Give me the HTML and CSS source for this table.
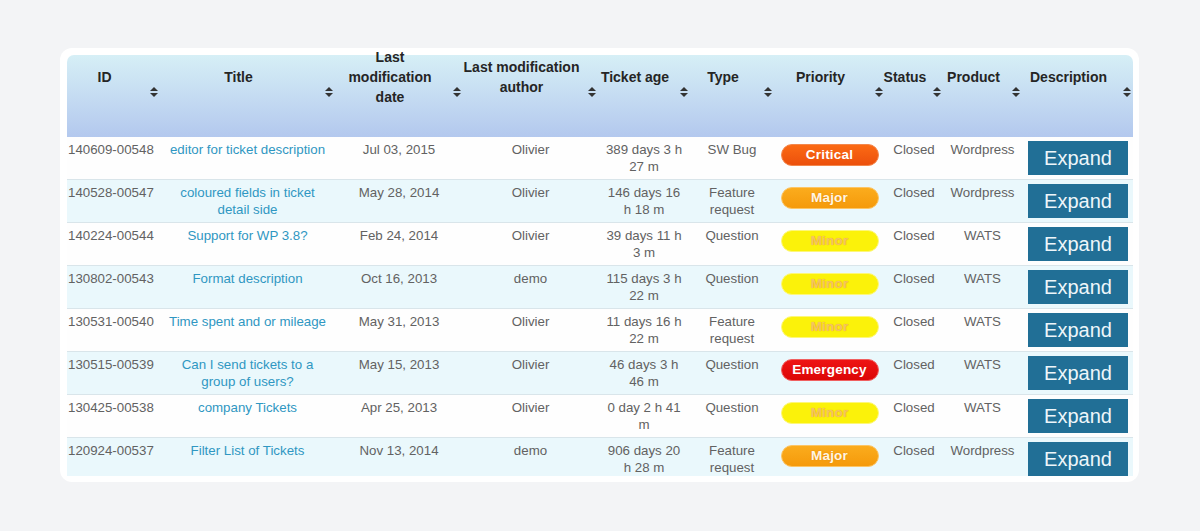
FILE: index.html
```html
<!DOCTYPE html>
<html lang="en">
<head>
<meta charset="utf-8">
<title>Tickets</title>
<link rel="stylesheet" href="styles.css">
</head>
<body>
<div class="card">
  <div class="wrap">
    <table class="tickets">
      <colgroup>
        <col class="c-id"><col class="c-title"><col class="c-date"><col class="c-author"><col class="c-age"><col class="c-type"><col class="c-prio"><col class="c-status"><col class="c-product"><col class="c-desc">
      </colgroup>
      <thead>
        <tr>
          <th><div class="th-in">ID</div><span class="sort"></span></th>
          <th><div class="th-in">Title</div><span class="sort"></span></th>
          <th><div class="th-in">Last<br>modification<br>date</div><span class="sort"></span></th>
          <th><div class="th-in">Last modification<br>author</div><span class="sort"></span></th>
          <th><div class="th-in">Ticket age</div><span class="sort"></span></th>
          <th><div class="th-in">Type</div><span class="sort"></span></th>
          <th><div class="th-in">Priority</div><span class="sort"></span></th>
          <th><div class="th-in">Status</div><span class="sort"></span></th>
          <th><div class="th-in">Product</div><span class="sort"></span></th>
          <th><div class="th-in">Description</div><span class="sort"></span></th>
        </tr>
      </thead>
      <tbody>
        <tr>
          <td class="id">140609-00548</td>
          <td><a class="link">editor for ticket description</a></td>
          <td>Jul 03, 2015</td>
          <td>Olivier</td>
          <td class="age">389 days 3 h 27 m</td>
          <td>SW Bug</td>
          <td><span class="badge critical">Critical</span></td>
          <td>Closed</td>
          <td>Wordpress</td>
          <td><button class="expand">Expand</button></td>
        </tr>
        <tr>
          <td class="id">140528-00547</td>
          <td><a class="link">coloured fields in ticket detail side</a></td>
          <td>May 28, 2014</td>
          <td>Olivier</td>
          <td class="age">146 days 16 h 18 m</td>
          <td>Feature request</td>
          <td><span class="badge major">Major</span></td>
          <td>Closed</td>
          <td>Wordpress</td>
          <td><button class="expand">Expand</button></td>
        </tr>
        <tr>
          <td class="id">140224-00544</td>
          <td><a class="link">Support for WP 3.8?</a></td>
          <td>Feb 24, 2014</td>
          <td>Olivier</td>
          <td class="age">39 days 11 h 3 m</td>
          <td>Question</td>
          <td><span class="badge minor">Minor</span></td>
          <td>Closed</td>
          <td>WATS</td>
          <td><button class="expand">Expand</button></td>
        </tr>
        <tr>
          <td class="id">130802-00543</td>
          <td><a class="link">Format description</a></td>
          <td>Oct 16, 2013</td>
          <td>demo</td>
          <td class="age">115 days 3 h 22 m</td>
          <td>Question</td>
          <td><span class="badge minor">Minor</span></td>
          <td>Closed</td>
          <td>WATS</td>
          <td><button class="expand">Expand</button></td>
        </tr>
        <tr>
          <td class="id">130531-00540</td>
          <td><a class="link">Time spent and or mileage</a></td>
          <td>May 31, 2013</td>
          <td>Olivier</td>
          <td class="age">11 days 16 h 22 m</td>
          <td>Feature request</td>
          <td><span class="badge minor">Minor</span></td>
          <td>Closed</td>
          <td>WATS</td>
          <td><button class="expand">Expand</button></td>
        </tr>
        <tr>
          <td class="id">130515-00539</td>
          <td><a class="link">Can I send tickets to a group of users?</a></td>
          <td>May 15, 2013</td>
          <td>Olivier</td>
          <td class="age">46 days 3 h 46 m</td>
          <td>Question</td>
          <td><span class="badge emergency">Emergency</span></td>
          <td>Closed</td>
          <td>WATS</td>
          <td><button class="expand">Expand</button></td>
        </tr>
        <tr>
          <td class="id">130425-00538</td>
          <td><a class="link">company Tickets</a></td>
          <td>Apr 25, 2013</td>
          <td>Olivier</td>
          <td class="age">0 day 2 h 41 m</td>
          <td>Question</td>
          <td><span class="badge minor">Minor</span></td>
          <td>Closed</td>
          <td>WATS</td>
          <td><button class="expand">Expand</button></td>
        </tr>
        <tr>
          <td class="id">120924-00537</td>
          <td><a class="link">Filter List of Tickets</a></td>
          <td>Nov 13, 2014</td>
          <td>demo</td>
          <td class="age">906 days 20 h 28 m</td>
          <td>Feature request</td>
          <td><span class="badge major">Major</span></td>
          <td>Closed</td>
          <td>Wordpress</td>
          <td><button class="expand">Expand</button></td>
        </tr>
      </tbody>
    </table>
  </div>
</div>
</body>
</html>
```

FILE: styles.css
```css
html, body {
  margin: 0;
  padding: 0;
  background: #f3f4f6;
  height: 531px;
  overflow: hidden;
}
body {
  font-family: "Liberation Sans", Arial, sans-serif;
}
.card {
  margin: 48px 61px 0 60px;
  width: 1079px;
  height: 434px;
  box-sizing: border-box;
  background: #ffffff;
  border-radius: 12px;
  padding: 7px 6px 6px 7px;
}
.wrap {
  height: 421px;
  clip-path: inset(-12px 0 0 0);
}
.tickets {
  width: 1066px;
  table-layout: fixed;
  border-collapse: collapse;
  border-spacing: 0;
}
.c-id { width: 93px; }
.c-title { width: 175px; }
.c-date { width: 128px; }
.c-author { width: 135px; }
.c-age { width: 92px; }
.c-type { width: 84px; }
.c-prio { width: 111px; }
.c-status { width: 58px; }
.c-product { width: 79px; }
.c-desc { width: 111px; }

.tickets thead th {
  position: relative;
  height: 82px;
  padding: 0 18px 0 0;
  vertical-align: top;
  background: linear-gradient(to bottom, #d6eff6 0%, #c5dcf2 50%, #b3c8ee 100%);
  font-size: 14px;
  font-weight: bold;
  color: #252525;
  line-height: 20px;
  text-align: center;
  white-space: nowrap;
}
.tickets thead th:first-child { border-top-left-radius: 7px; }
.tickets thead th:last-child { border-top-right-radius: 7px; }
.th-in {
  height: 44px;
  display: flex;
  align-items: center;
  justify-content: center;
}
.sort {
  position: absolute;
  right: 2px;
  top: 32px;
  width: 8px;
  height: 10px;
}
.sort::before,
.sort::after {
  content: "";
  position: absolute;
  left: 0;
  border-left: 4px solid transparent;
  border-right: 4px solid transparent;
}
.sort::before {
  top: 0;
  border-bottom: 4px solid #333;
}
.sort::after {
  bottom: 0;
  border-top: 4px solid #333;
}

.tickets tbody td {
  padding: 4px 4px;
  vertical-align: top;
  text-align: center;
  font-size: 13.3px;
  line-height: 17px;
  color: #626262;
  border-bottom: 1px solid #d9e5ea;
}
.tickets tbody tr:nth-child(odd) td { background: #fefefe; }
.tickets tbody tr:nth-child(even) td { background: #eaf8fc; }
.tickets tbody td.id {
  text-align: left;
  padding-left: 1px;
  padding-right: 0;
}
.tickets tbody td.age {
  padding-left: 7px;
  padding-right: 7px;
}
.link {
  color: #2f97c2;
  text-decoration: none;
}
.badge {
  display: block;
  box-sizing: border-box;
  width: 98px;
  height: 22px;
  margin: 3px auto 0;
  border-radius: 11px;
  font-size: 13.5px;
  font-weight: bold;
  line-height: 20px;
  letter-spacing: 0.2px;
}
.badge.critical {
  background: linear-gradient(to bottom, #fb6a14, #ec500c);
  border: 1px solid #f3874c;
  color: #ffffff;
}
.badge.major {
  background: linear-gradient(to bottom, #fbac1d, #f59a0b);
  border: 1px solid #fcc566;
  color: #fff5e4;
  text-shadow: 0 0 2px #e58a00;
}
.badge.minor {
  background: #fbf20a;
  border: 1px solid #fdf77a;
  color: #f4c660;
  text-shadow: 0 0 1px #e89a20;
}
.badge.emergency {
  background: linear-gradient(to bottom, #ee1414, #dc0606);
  border: 1px solid #f06060;
  color: #ffffff;
}
.expand {
  display: block;
  width: 100px;
  height: 34px;
  margin: 0 auto 0 2px;
  padding: 0;
  border: none;
  background: #216f96;
  color: #eef6fa;
  font-family: "Liberation Sans", Arial, sans-serif;
  font-size: 20px;
  line-height: 34px;
  text-align: center;
}
```
